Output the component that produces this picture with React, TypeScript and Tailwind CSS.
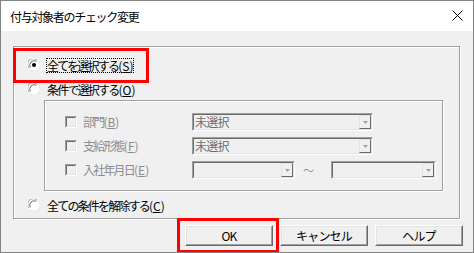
import React from "react";

const font = { fontFamily: '"Noto Sans CJK JP", "Noto Sans", sans-serif' };

function Radio({ checked }: { checked?: boolean }) {
  return (
    <svg width="12" height="12" viewBox="0 0 12 12" className="shrink-0">
      <circle cx="6" cy="6" r="5.5" fill="#ffffff" />
      <path d="M1.2 9 A5.5 5.5 0 0 1 9 1.2" fill="none" stroke="#a0a0a0" strokeWidth="1" />
      <path d="M2.3 8.3 A4.4 4.4 0 0 1 8.3 2.3" fill="none" stroke="#696969" strokeWidth="1" />
      <path d="M10.8 3 A5.5 5.5 0 0 1 3 10.8" fill="none" stroke="#e3e3e3" strokeWidth="1" />
      {checked && <circle cx="6" cy="6" r="2" fill="#000000" />}
    </svg>
  );
}

function Check() {
  return (
    <div className="w-[12px] h-[12px] shrink-0 border-t border-l border-t-[#a0a0a0] border-l-[#a0a0a0] border-b border-r border-b-white border-r-white">
      <div className="w-full h-full border-t border-l border-t-[#696969] border-l-[#696969] border-b border-r border-b-[#e3e3e3] border-r-[#e3e3e3] bg-[#f0f0f0]" />
    </div>
  );
}

function Combo({ width, text }: { width: number; text?: string }) {
  return (
    <div
      style={{ width }}
      className="h-[18px] shrink-0 border-t border-l border-t-[#a0a0a0] border-l-[#a0a0a0] border-b border-r border-b-white border-r-white"
    >
      <div className="w-full h-full flex border-t border-l border-t-[#696969] border-l-[#696969] border-b border-r border-b-[#e3e3e3] border-r-[#e3e3e3] bg-[#f0f0f0]">
        <div className="flex-1 flex items-center text-[12px] leading-[14px] text-[#6d6d6d] pl-[1px] whitespace-nowrap tracking-[-0.8px]">
          {text}
        </div>
        <div className="w-[12px] h-full flex items-center justify-center border-t border-l border-t-[#e3e3e3] border-l-[#e3e3e3] border-b border-r border-b-[#696969] border-r-[#696969] bg-[#f0f0f0]">
          <svg width="5" height="3" viewBox="0 0 5 3">
            <path d="M0 0 H5 L2.5 3 Z" fill="#a0a0a0" />
          </svg>
        </div>
      </div>
    </div>
  );
}

function Button({ children }: { children: React.ReactNode }) {
  return (
    <div className="w-[88px] h-[21px] border-t border-l border-t-white border-l-white border-b border-r border-b-[#696969] border-r-[#696969]">
      <div className="w-full h-full flex items-center justify-center border-t border-l border-t-[#e3e3e3] border-l-[#e3e3e3] border-b border-r border-b-[#a0a0a0] border-r-[#a0a0a0] bg-[#f0f0f0] text-[12px] text-black tracking-[-0.8px]">
        {children}
      </div>
    </div>
  );
}

function Acc({ k }: { k: string }) {
  return (
    <span className="tracking-normal">
      (<span className="underline underline-offset-[1px]">{k}</span>)
    </span>
  );
}

export default function App() {
  return (
    <div
      style={font}
      className="relative w-[474px] h-[253px] border border-[#838383] flex flex-col bg-[#f0f0f0] overflow-hidden"
    >
      {/* title bar */}
      <div className="h-[30px] bg-white flex items-center justify-between pl-[9px] pr-[10px] shrink-0">
        <span className="text-[12px] text-black tracking-[-1.3px] leading-none mt-[1px]">
          付与対象者のチェック変更
        </span>
        <svg width="11" height="11" viewBox="0 0 11 11" className="mt-[-1px]">
          <path d="M0.5 0.5 L10.5 10.5 M10.5 0.5 L0.5 10.5" stroke="#000" strokeWidth="1" />
        </svg>
      </div>

      {/* body */}
      <div className="flex-1 flex flex-col">
        {/* outer group */}
        <div className="ml-[12px] mt-[15px] w-[447px] h-[173px] border border-[#a0a0a0] shadow-[inset_1px_1px_0_#fff,1px_1px_0_#fff] flex flex-col text-[12px] text-black tracking-[-1.8px]">
          <div className="flex items-center h-[18px] mt-[9px] ml-[14px]">
            <Radio checked />
            <span className="ml-[6px] pl-[1px] pr-[1px] outline outline-1 outline-dotted outline-black -outline-offset-1 leading-[15px]">
              全てを選択する<Acc k="S" />
            </span>
          </div>
          <div className="flex items-center h-[18px] mt-[6px] ml-[14px]">
            <Radio />
            <span className="ml-[7px] leading-[15px]">
              条件で選択する<Acc k="O" />
            </span>
          </div>

          {/* inner group */}
          <div className="ml-[30px] mt-[2px] w-[399px] h-[91px] border border-[#a0a0a0] shadow-[inset_1px_1px_0_#fff,1px_1px_0_#fff] flex flex-col text-[#8c8c8c]">
            <div className="flex items-center mt-[12px] h-[18px]">
              <div className="ml-[20px]"><Check /></div>
              <span className="ml-[6px] w-[109px]">部門<Acc k="B" /></span>
              <Combo width={181} text="未選択" />
            </div>
            <div className="flex items-center mt-[6px] h-[18px]">
              <div className="ml-[20px]"><Check /></div>
              <span className="ml-[6px] w-[109px]">支給形態<Acc k="F" /></span>
              <Combo width={181} text="未選択" />
            </div>
            <div className="flex items-center mt-[6px] h-[18px]">
              <div className="ml-[20px]"><Check /></div>
              <span className="ml-[6px] w-[109px]">入社年月日<Acc k="E" /></span>
              <Combo width={103} />
              <span className="ml-[8px] w-[28px] text-[11px] text-[#8c8c8c] tracking-normal">～</span>
              <Combo width={105} />
            </div>
          </div>

          <div className="flex items-center h-[18px] mt-[5px] ml-[14px]">
            <Radio />
            <span className="ml-[7px] leading-[15px]">
              全ての条件を解除する<Acc k="C" />
            </span>
          </div>
        </div>

        {/* buttons */}
        <div className="flex justify-end gap-[7px] mt-[6px] pr-[10px]">
          <Button>OK</Button>
          <Button>キャンセル</Button>
          <Button>ヘルプ</Button>
        </div>
      </div>

      {/* red annotation boxes */}
      <div className="absolute left-[12px] top-[47px] w-[136px] h-[35px] border-[3px] border-[#ff0000] pointer-events-none" />
      <div className="absolute left-[176px] top-[217px] w-[102px] h-[35px] border-[3px] border-[#ff0000] pointer-events-none" />
    </div>
  );
}
